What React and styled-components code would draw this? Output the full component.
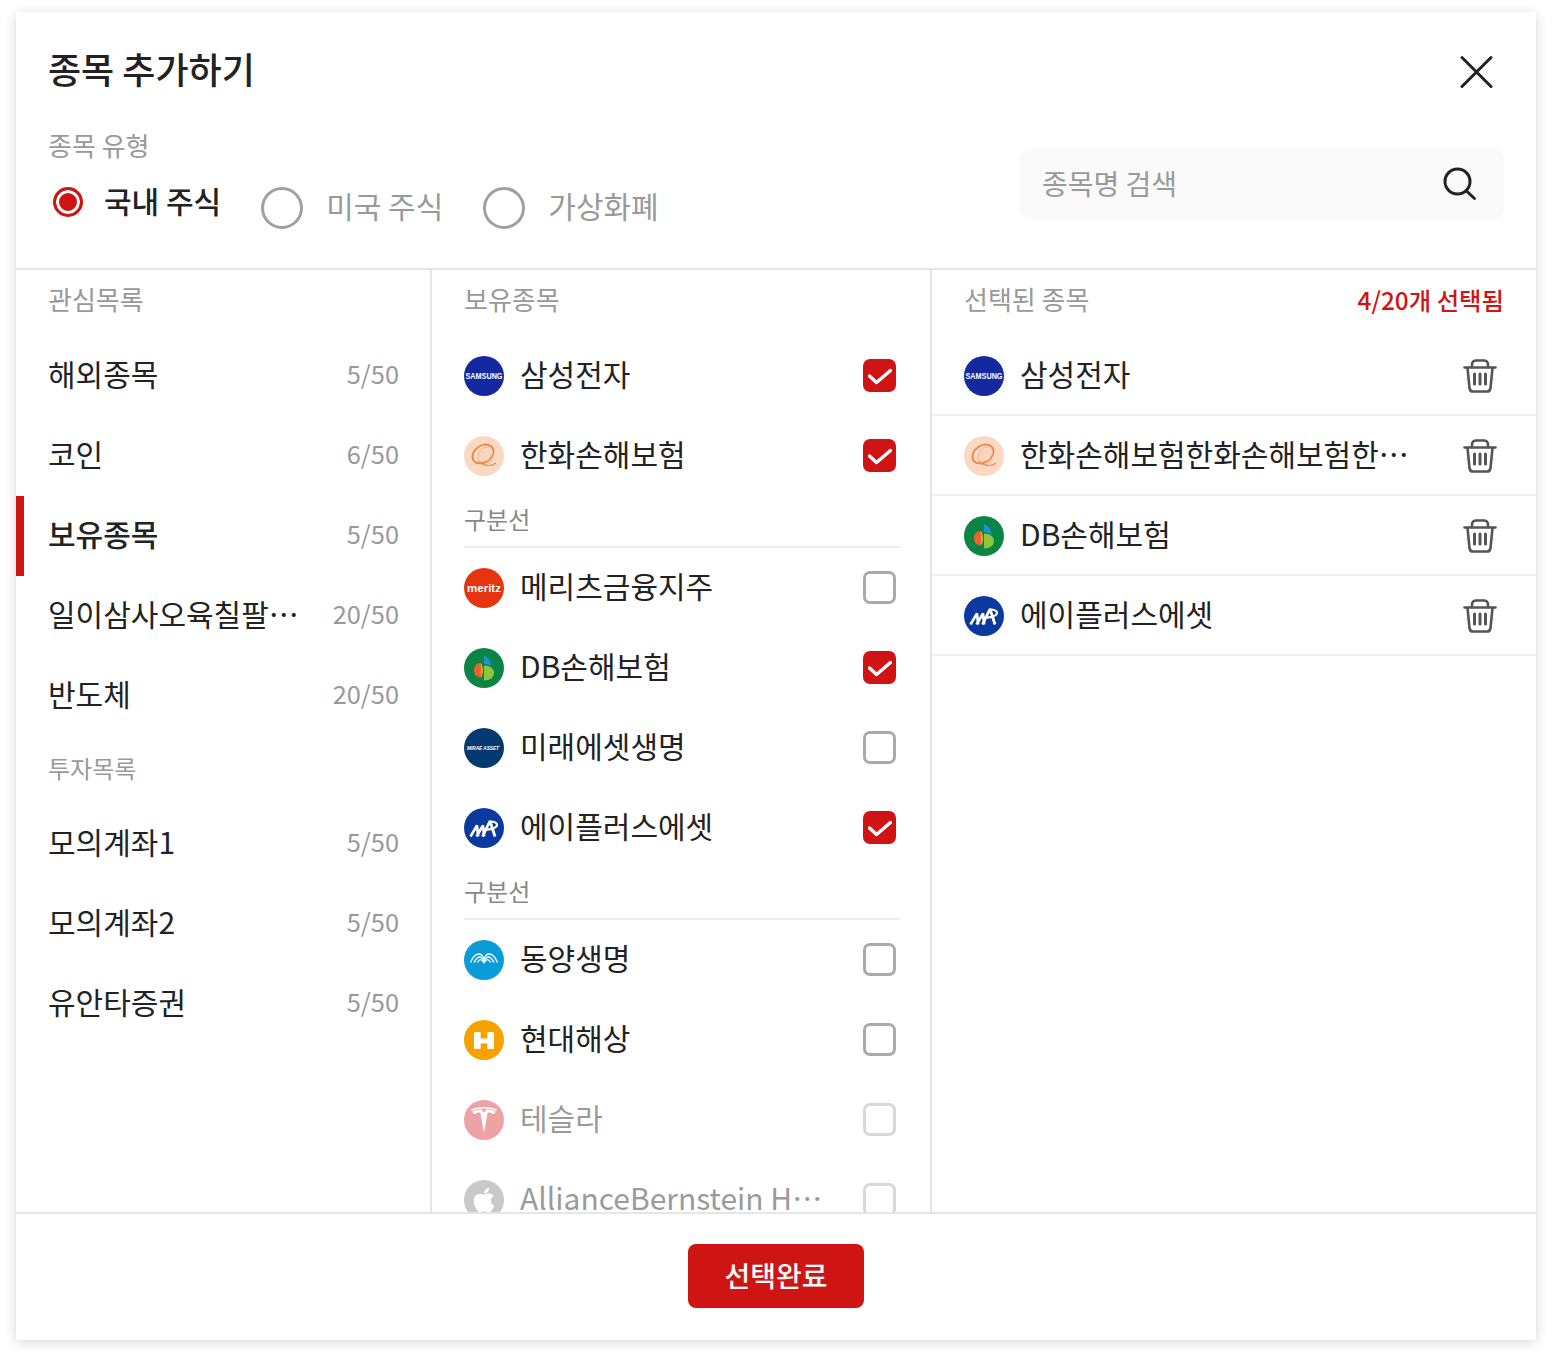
import React from 'react';
import styled, { createGlobalStyle } from 'styled-components';
import { SiTesla } from 'react-icons/si';
import { FaApple } from 'react-icons/fa';

const RED = '#cf1414';
const INK = '#222222';
const GRAY = '#999999';
const LINE = '#e6e6e6';

const watchLists = [
  { name: '해외종목', count: '5/50' },
  { name: '코인', count: '6/50' },
  { name: '보유종목', count: '5/50', active: true },
  { name: '일이삼사오육칠팔구십', count: '20/50' },
  { name: '반도체', count: '20/50' },
];

const accounts = [
  { name: '모의계좌1', count: '5/50' },
  { name: '모의계좌2', count: '5/50' },
  { name: '유안타증권', count: '5/50' },
];

const holdings = [
  { name: '삼성전자', logo: 'samsung', checked: true },
  { name: '한화손해보험', logo: 'hanwha', checked: true },
  { divider: '구분선' },
  { name: '메리츠금융지주', logo: 'meritz' },
  { name: 'DB손해보험', logo: 'db', checked: true },
  { name: '미래에셋생명', logo: 'mirae' },
  { name: '에이플러스에셋', logo: 'aplus', checked: true },
  { divider: '구분선' },
  { name: '동양생명', logo: 'tongyang' },
  { name: '현대해상', logo: 'hyundai' },
  { name: '테슬라', logo: 'tesla', disabled: true },
  { name: 'AllianceBernstein Holding', logo: 'apple', disabled: true },
];

const selected = [
  { name: '삼성전자', logo: 'samsung' },
  { name: '한화손해보험한화손해보험한화손해보험', logo: 'hanwha' },
  { name: 'DB손해보험', logo: 'db' },
  { name: '에이플러스에셋', logo: 'aplus' },
];

const logoColors = {
  samsung: '#1428a0',
  hanwha: '#fbd8c2',
  meritz: '#e5340f',
  db: '#0b8546',
  mirae: '#043a70',
  aplus: '#0c399f',
  tongyang: '#0b9bd9',
  hyundai: '#f6a200',
  tesla: '#d8333a',
  apple: '#8a8a8a',
};

const LogoArt = ({ type }) => {
  switch (type) {
    case 'samsung':
      return (
        <svg width="40" height="40" viewBox="0 0 40 40">
          <text x="20" y="23.4" textAnchor="middle" fontSize="9" fontWeight="700" fill="#fff" fontFamily="Liberation Sans, sans-serif" textLength="37" lengthAdjust="spacingAndGlyphs">SAMSUNG</text>
        </svg>
      );
    case 'hanwha':
      return (
        <svg width="40" height="40" viewBox="0 0 40 40" fill="none">
          <ellipse cx="19" cy="18" rx="11.500" ry="8.500" stroke="#ea7a35" strokeWidth="1.500" transform="rotate(-35 19 18)" />
          <ellipse cx="21.500" cy="20" rx="7" ry="9.500" stroke="#f2ac7e" strokeWidth="0.800" transform="rotate(25 21.500 20)" />
          <path d="M15 25c4 5 12 6 17 2" stroke="#ee8a4c" strokeWidth="1.100" />
          <circle cx="22" cy="20" r="4.500" stroke="#f6c6a6" strokeWidth="0.800" />
        </svg>
      );
    case 'meritz':
      return (
        <svg width="40" height="40" viewBox="0 0 40 40">
          <text x="20" y="23.6" textAnchor="middle" fontSize="11.500" fontWeight="700" fill="#fff" fontFamily="Liberation Sans, sans-serif">meritz</text>
        </svg>
      );
    case 'db':
      return (
        <svg width="40" height="40" viewBox="0 0 40 40">
          <path d="M20 8c4.500 1.500 7 5 7 10-2.500-1.500-4.500-2-7-2z" fill="#1f8fe0" />
          <path d="M20 17.500c6 0 10 3 10 7.500s-4 7.500-10 7.500z" fill="#8cc63f" />
          <path d="M17 15v14.500c-4.500 0-7-3-7-7.200S12.500 15 17 15z" fill="#f0622a" />
          <path d="M17 15c1.200 2 1.800 4.600 1.800 7.200s-.6 5.200-1.800 7.300z" fill="#f6b21b" />
        </svg>
      );
    case 'mirae':
      return (
        <svg width="40" height="40" viewBox="0 0 40 40">
          <text x="19" y="21.800" textAnchor="middle" fontSize="5" fontWeight="700" fontStyle="italic" fill="#fff" fontFamily="Liberation Sans, sans-serif" textLength="32" lengthAdjust="spacingAndGlyphs">MIRAE ASSET</text>
          <path d="M33 20l3-3" stroke="#f29100" strokeWidth="0.700" />
        </svg>
      );
    case 'aplus':
      return (
        <svg width="40" height="40" viewBox="0 0 40 40" fill="none" stroke="#fff" strokeLinejoin="bevel">
          <path d="M6.500 28.500l6.500-11 1.200 11M12.500 28.500l6.500-11 1.200 11" strokeWidth="2.600" />
          <path d="M18.500 28.500l7.500-15.500 5 15.500" strokeWidth="2.800" />
          <path d="M20 21.500c5 .5 12-.8 13-4.300.5-2-2-3.700-7-3.700" strokeWidth="2.200" />
        </svg>
      );
    case 'tongyang':
      return (
        <svg width="40" height="40" viewBox="0 0 40 40" fill="none" stroke="#f2fbff" strokeWidth="1.300">
          <path d="M6.500 22.500c2-5 5.500-8.500 8.500-8.500 2.200 0 4 2.500 5 5 1-2.500 2.800-5 5-5 3 0 6.500 3.500 8.500 8.500" />
          <path d="M10 22.500c1.800-3.200 3.800-5.500 5.500-5.500 1.700 0 3.300 2 4.500 4.500 1.200-2.500 2.800-4.500 4.500-4.500 1.700 0 3.700 2.300 5.500 5.500" />
          <path d="M13.500 22.500c1-1.800 2-2.800 3-2.800 1.200 0 2.400 1.200 3.500 3 1.100-1.800 2.300-3 3.500-3 1 0 2 1 3 2.800" />
        </svg>
      );
    case 'hyundai':
      return (
        <svg width="40" height="40" viewBox="0 0 40 40">
          <path d="M11.500 12h4c.8 0 1.200.4 1.200 1.200v5.300h6.600v-5.300c0-.8.4-1.200 1.200-1.200h4c1 0 1.500.5 1.500 1.500v14c0 1-.5 1.500-1.500 1.500h-4c-.8 0-1.200-.4-1.200-1.200v-4.300h-6.600v4.300c0 .8-.4 1.200-1.200 1.200h-4c-1 0-1.500-.5-1.500-1.500v-14c0-1 .5-1.500 1.500-1.500z" fill="#fff" />
        </svg>
      );
    case 'tesla':
      return <SiTesla size={26} color="#fff" />;
    case 'apple':
      return <FaApple size={28} color="#fff" />;
    default:
      return null;
  }
};

const Logo = ({ type }) => (
  <LogoCircle $bg={logoColors[type]}>
    <LogoArt type={type} />
  </LogoCircle>
);

const CheckBox = ({ checked }) => (
  <CheckFrame $checked={checked}>
    {checked && (
      <svg width="24" height="24" viewBox="0 0 24 24" fill="none">
        <polyline points="1.500 12 8.500 18.500 22.500 6.500" stroke="#fff" strokeWidth="3.400" strokeLinecap="round" strokeLinejoin="round" />
      </svg>
    )}
  </CheckFrame>
);

const TrashIcon = () => (
  <svg width="34" height="34" viewBox="0 0 34 34" fill="none" stroke="#555" strokeWidth="2.600" strokeLinecap="round" strokeLinejoin="round">
    <path d="M1.500 8.500h31" />
    <path d="M9 8V5.500C9 3 11 1.500 13 1.500h8c2 0 4 1.500 4 4V8" />
    <path d="M4.500 9l2 20c.2 2 1.500 3.500 3.500 3.500h14c2 0 3.300-1.500 3.500-3.500l2-20" />
    <path d="M11.500 15v10M17 15v10M22.500 15v10" strokeWidth="3" />
  </svg>
);

const App = () => (
  <>
    <GlobalStyle />
    <Modal>
      <Header>
        <TitleRow>
          <Title>종목 추가하기</Title>
          <CloseButton aria-label="닫기">
            <svg width="34" height="34" viewBox="0 0 34 34" fill="none" stroke={INK} strokeWidth="3" strokeLinecap="round">
              <path d="M3 2.500l29 29M32 2.500l-29 29" />
            </svg>
          </CloseButton>
        </TitleRow>
        <FilterRow>
          <div>
            <FieldLabel>종목 유형</FieldLabel>
            <RadioGroup>
              <RadioItem>
                <RadioOn />
                <RadioLabel $on>국내 주식</RadioLabel>
              </RadioItem>
              <RadioItem>
                <RadioOff />
                <RadioLabel>미국 주식</RadioLabel>
              </RadioItem>
              <RadioItem>
                <RadioOff />
                <RadioLabel>가상화폐</RadioLabel>
              </RadioItem>
            </RadioGroup>
          </div>
          <SearchBox>
            <SearchText>종목명 검색</SearchText>
            <svg width="36" height="36" viewBox="0 0 36 36" fill="none" stroke={INK} strokeWidth="3" strokeLinecap="round">
              <circle cx="16.500" cy="15.500" r="12.500" />
              <path d="M25.500 25l8 7.500" />
            </svg>
          </SearchBox>
        </FilterRow>
      </Header>

      <Body>
        <ListColumn>
          <ColumnHead>
            <HeadText>관심목록</HeadText>
          </ColumnHead>
          {watchLists.map(item => (
            <ListRow key={item.name} $active={item.active}>
              <RowName $active={item.active}>{item.name}</RowName>
              <Count>{item.count}</Count>
            </ListRow>
          ))}
          <SubHead>투자목록</SubHead>
          {accounts.map(item => (
            <ListRow key={item.name}>
              <RowName>{item.name}</RowName>
              <Count>{item.count}</Count>
            </ListRow>
          ))}
        </ListColumn>

        <HoldColumn>
          <ColumnHead>
            <HeadText>보유종목</HeadText>
          </ColumnHead>
          {holdings.map((item, i) =>
            item.divider ? (
              <Divider key={i}>{item.divider}</Divider>
            ) : (
              <HoldRow key={item.name} $disabled={item.disabled}>
                <Logo type={item.logo} />
                <StockName>{item.name}</StockName>
                <CheckBox checked={item.checked} />
              </HoldRow>
            )
          )}
        </HoldColumn>

        <PickedColumn>
          <ColumnHead>
            <HeadText>선택된 종목</HeadText>
            <PickedCount>4/20개 선택됨</PickedCount>
          </ColumnHead>
          {selected.map(item => (
            <PickedRow key={item.name}>
              <Logo type={item.logo} />
              <StockName>{item.name}</StockName>
              <TrashIcon />
            </PickedRow>
          ))}
        </PickedColumn>
      </Body>

      <Footer>
        <DoneButton>선택완료</DoneButton>
      </Footer>
    </Modal>
  </>
);

export default App;

const GlobalStyle = createGlobalStyle`
  html, body {
    margin: 0;
    background: #fff;
  }
  body {
    font-family: "Noto Sans CJK KR", "Noto Sans", sans-serif;
    color: ${INK};
  }
  * {
    box-sizing: border-box;
  }
`;

const Modal = styled.div`
  width: 1520px;
  height: 1328px;
  margin: 12px 16px 20px;
  background: #fff;
  box-shadow: 0 2px 12px rgba(0, 0, 0, 0.16);
  display: flex;
  flex-direction: column;
`;

const Header = styled.header`
  height: 258px;
  padding: 36px 32px 0;
  border-bottom: 2px solid ${LINE};
  flex: none;
`;

const TitleRow = styled.div`
  display: flex;
  justify-content: space-between;
  align-items: center;
  height: 44px;
`;

const Title = styled.h1`
  margin: 0 0 4px;
  font-size: 36px;
  line-height: 40px;
  font-weight: 500;
  color: ${INK};
`;

const CloseButton = styled.button`
  border: 0;
  padding: 0;
  background: none;
  display: flex;
  margin: 4px 11px 0 0;
`;

const FilterRow = styled.div`
  display: flex;
  justify-content: space-between;
  margin-top: 34px;
`;

const FieldLabel = styled.div`
  font-size: 26px;
  line-height: 38px;
  color: ${GRAY};
`;

const RadioGroup = styled.div`
  display: flex;
  align-items: flex-start;
  gap: 40px;
  margin-top: 23px;
`;

const RadioItem = styled.div`
  display: flex;
  align-items: center;
  gap: 23px;
`;

const RadioOn = styled.span`
  width: 30px;
  height: 30px;
  margin-left: 5px;
  margin-right: -2px;
  border-radius: 50%;
  border: 3px solid ${RED};
  background: ${RED};
  box-shadow: inset 0 0 0 3px #fff;
  flex: none;
`;

const RadioOff = styled.span`
  width: 42px;
  height: 42px;
  border-radius: 50%;
  border: 3px solid #a0a0a0;
  flex: none;
`;

const RadioLabel = styled.span`
  margin-bottom: ${props => (props.$on ? 4 : 6)}px;
  font-size: 30px;
  line-height: 26px;
  font-weight: ${props => (props.$on ? 500 : 400)};
  color: ${props => (props.$on ? INK : GRAY)};
`;

const SearchBox = styled.div`
  width: 485px;
  height: 72px;
  margin-top: 22px;
  padding: 0 27px 0 23px;
  display: flex;
  align-items: center;
  justify-content: space-between;
  background: #fafafa;
  border-radius: 12px;
`;

const SearchText = styled.span`
  margin-bottom: 2px;
  font-size: 28px;
  line-height: 42px;
  color: ${GRAY};
`;

const Body = styled.div`
  flex: 1;
  min-height: 0;
  display: flex;
  overflow: hidden;
`;

const ListColumn = styled.section`
  width: 416px;
  flex: none;
  border-right: 2px solid ${LINE};
`;

const HoldColumn = styled.section`
  width: 500px;
  flex: none;
  padding: 0 30px 0 32px;
  border-right: 2px solid ${LINE};
`;

const PickedColumn = styled.section`
  flex: 1;
  min-width: 0;
`;

const ColumnHead = styled.div`
  height: 66px;
  padding-top: 10px;
  display: flex;
  justify-content: space-between;
  align-items: flex-start;
  ${PickedColumn} & {
    padding-left: 32px;
    padding-right: 32px;
  }
  ${ListColumn} & {
    padding-left: 32px;
  }
`;

const HeadText = styled.span`
  font-size: 26px;
  line-height: 38px;
  color: ${GRAY};
`;

const PickedCount = styled.span`
  margin-top: 1px;
  font-size: 24.4px;
  line-height: 38px;
  font-weight: 500;
  color: ${RED};
`;

const SubHead = styled.div`
  height: 68px;
  padding: 14px 0 0 32px;
  font-size: 24px;
  line-height: 36px;
  color: ${GRAY};
`;

const ListRow = styled.div`
  height: 80px;
  padding: 0 31px 0 ${props => (props.$active ? 24 : 32)}px;
  display: flex;
  align-items: center;
  justify-content: space-between;
  border-left: ${props => (props.$active ? `8px solid ${RED}` : 'none')};
`;

const RowName = styled.span`
  width: 260px;
  margin-bottom: 6px;
  font-size: 30px;
  line-height: 44px;
  font-weight: ${props => (props.$active ? 500 : 400)};
  color: ${INK};
  white-space: nowrap;
  overflow: hidden;
  text-overflow: ellipsis;
`;

const Count = styled.span`
  margin-bottom: 6px;
  font-size: 25.4px;
  line-height: 38px;
  color: ${GRAY};
`;

const Divider = styled.div`
  height: 52px;
  padding-top: 5px;
  font-size: 24px;
  line-height: 36px;
  color: #888;
  border-bottom: 2px solid #eeeeee;
`;

const LogoCircle = styled.span`
  width: 40px;
  height: 40px;
  border-radius: 50%;
  background: ${props => props.$bg};
  display: flex;
  align-items: center;
  justify-content: center;
  overflow: hidden;
  flex: none;
`;

const StockName = styled.span`
  flex: 1;
  min-width: 0;
  margin: 0 40px 6px 16px;
  font-size: 30px;
  line-height: 44px;
  color: ${INK};
  white-space: nowrap;
  overflow: hidden;
  text-overflow: ellipsis;
`;

const HoldRow = styled.div`
  height: 80px;
  padding-right: 4px;
  display: flex;
  align-items: center;
  opacity: ${props => (props.$disabled ? 0.45 : 1)};
`;

const PickedRow = styled.div`
  height: 80px;
  padding: 2px 39px 0 32px;
  display: flex;
  align-items: center;
  border-bottom: 2px solid #f0f0f0;
  ${StockName} {
    margin-right: 52px;
  }
`;

const CheckFrame = styled.span`
  width: 33px;
  height: 33px;
  margin-bottom: 1px;
  border-radius: 7px;
  display: flex;
  align-items: center;
  justify-content: center;
  flex: none;
  background: ${props => (props.$checked ? RED : '#fff')};
  border: ${props => (props.$checked ? 'none' : '3px solid #aaaaaa')};
`;

const Footer = styled.footer`
  height: 128px;
  flex: none;
  padding-top: 30px;
  border-top: 2px solid ${LINE};
  display: flex;
  justify-content: center;
  align-items: flex-start;
`;

const DoneButton = styled.button`
  width: 176px;
  height: 64px;
  padding: 0 0 2px;
  border: 0;
  border-radius: 8px;
  background: ${RED};
  color: #fff;
  font-family: inherit;
  font-size: 28px;
  font-weight: 500;
`;
